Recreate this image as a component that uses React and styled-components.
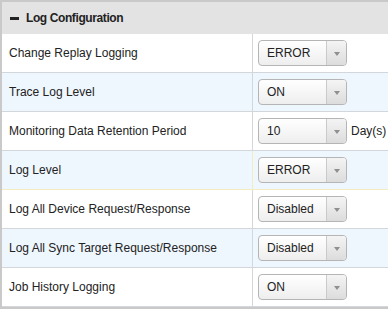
import React from "react";
import styled, { createGlobalStyle } from "styled-components";

const Global = createGlobalStyle`
  html, body { margin: 0; padding: 0; background: #fff; }
  body { width: 388px; height: 309px; overflow: hidden; font-family: "Liberation Sans", Arial, sans-serif; }
`;

const Panel = styled.div`
  width: 100%;
  border-top: 2px solid #c9c9c9;
  border-left: 2px solid #c9c9c9;
  border-bottom: 3px solid #c9c9c9;
  box-sizing: border-box;
`;

const Header = styled.div`
  height: 32px;
  background: #e3e3e3;
  display: flex;
  align-items: center;
  gap: 7px;
  padding-left: 8px;
  font-size: 12px;
  letter-spacing: -0.4px;
  font-weight: bold;
  color: #222;
`;

const Dash = styled.span`
  display: inline-block;
  width: 9px;
  height: 3px;
  background: #222;
`;

const Row = styled.div`
  display: grid;
  grid-template-columns: 251px 1fr;
  height: 39px;
  box-sizing: border-box;
  background: ${(p) => (p.$alt ? "#eef6fe" : "#fff")};
  border-bottom: 1px solid ${(p) => (p.$hl ? "#f3ecc0" : "#d3d7db")};
`;

const Label = styled.div`
  display: flex;
  align-items: center;
  padding-left: 7px;
  font-size: 12px;
  color: #222;
  border-right: 1px solid ${(p) => (p.$hl ? "#f3ecc0" : "#d3d7db")};
`;

const Value = styled.div`
  display: flex;
  align-items: center;
  gap: 4px;
  padding-left: 5px;
  padding-bottom: 1px;
  font-size: 12px;
  color: #222;
`;

const Select = styled.div`
  display: flex;
  width: 89px;
  height: 26px;
  box-sizing: border-box;
  border: 1px solid #b5b5b5;
  border-radius: 4px;
  background: linear-gradient(#ffffff, #eeeeee);
  overflow: hidden;
`;

const SelText = styled.span`
  flex: 1;
  display: flex;
  align-items: center;
  padding-left: 8px;
  font-size: 12px;
  color: #222;
`;

const Arrow = styled.span`
  width: 19px;
  display: flex;
  align-items: center;
  justify-content: center;
  border-left: 1px solid #cacaca;
  background: linear-gradient(#f4f4f4, #dcdcdc);
  &::after {
    content: "";
    border-left: 3px solid transparent;
    border-right: 3px solid transparent;
    border-top: 4px solid #8f8f8f;
    margin-top: 2px;
  }
`;

const rows = [
  { label: "Change Replay Logging", value: "ERROR" },
  { label: "Trace Log Level", value: "ON" },
  { label: "Monitoring Data Retention Period", value: "10", suffix: "Day(s)" },
  { label: "Log Level", value: "ERROR", hl: true },
  { label: "Log All Device Request/Response", value: "Disabled" },
  { label: "Log All Sync Target Request/Response", value: "Disabled" },
  { label: "Job History Logging", value: "ON" },
];

export default function App() {
  return (
    <>
      <Global />
      <Panel>
        <Header>
          <Dash />
          <span>Log Configuration</span>
        </Header>
        {rows.map((r, i) => (
          <Row key={r.label} $alt={i % 2 === 1} $hl={r.hl}>
            <Label $hl={r.hl}>{r.label}</Label>
            <Value>
              <Select>
                <SelText>{r.value}</SelText>
                <Arrow />
              </Select>
              {r.suffix && <span>{r.suffix}</span>}
            </Value>
          </Row>
        ))}
      </Panel>
    </>
  );
}
